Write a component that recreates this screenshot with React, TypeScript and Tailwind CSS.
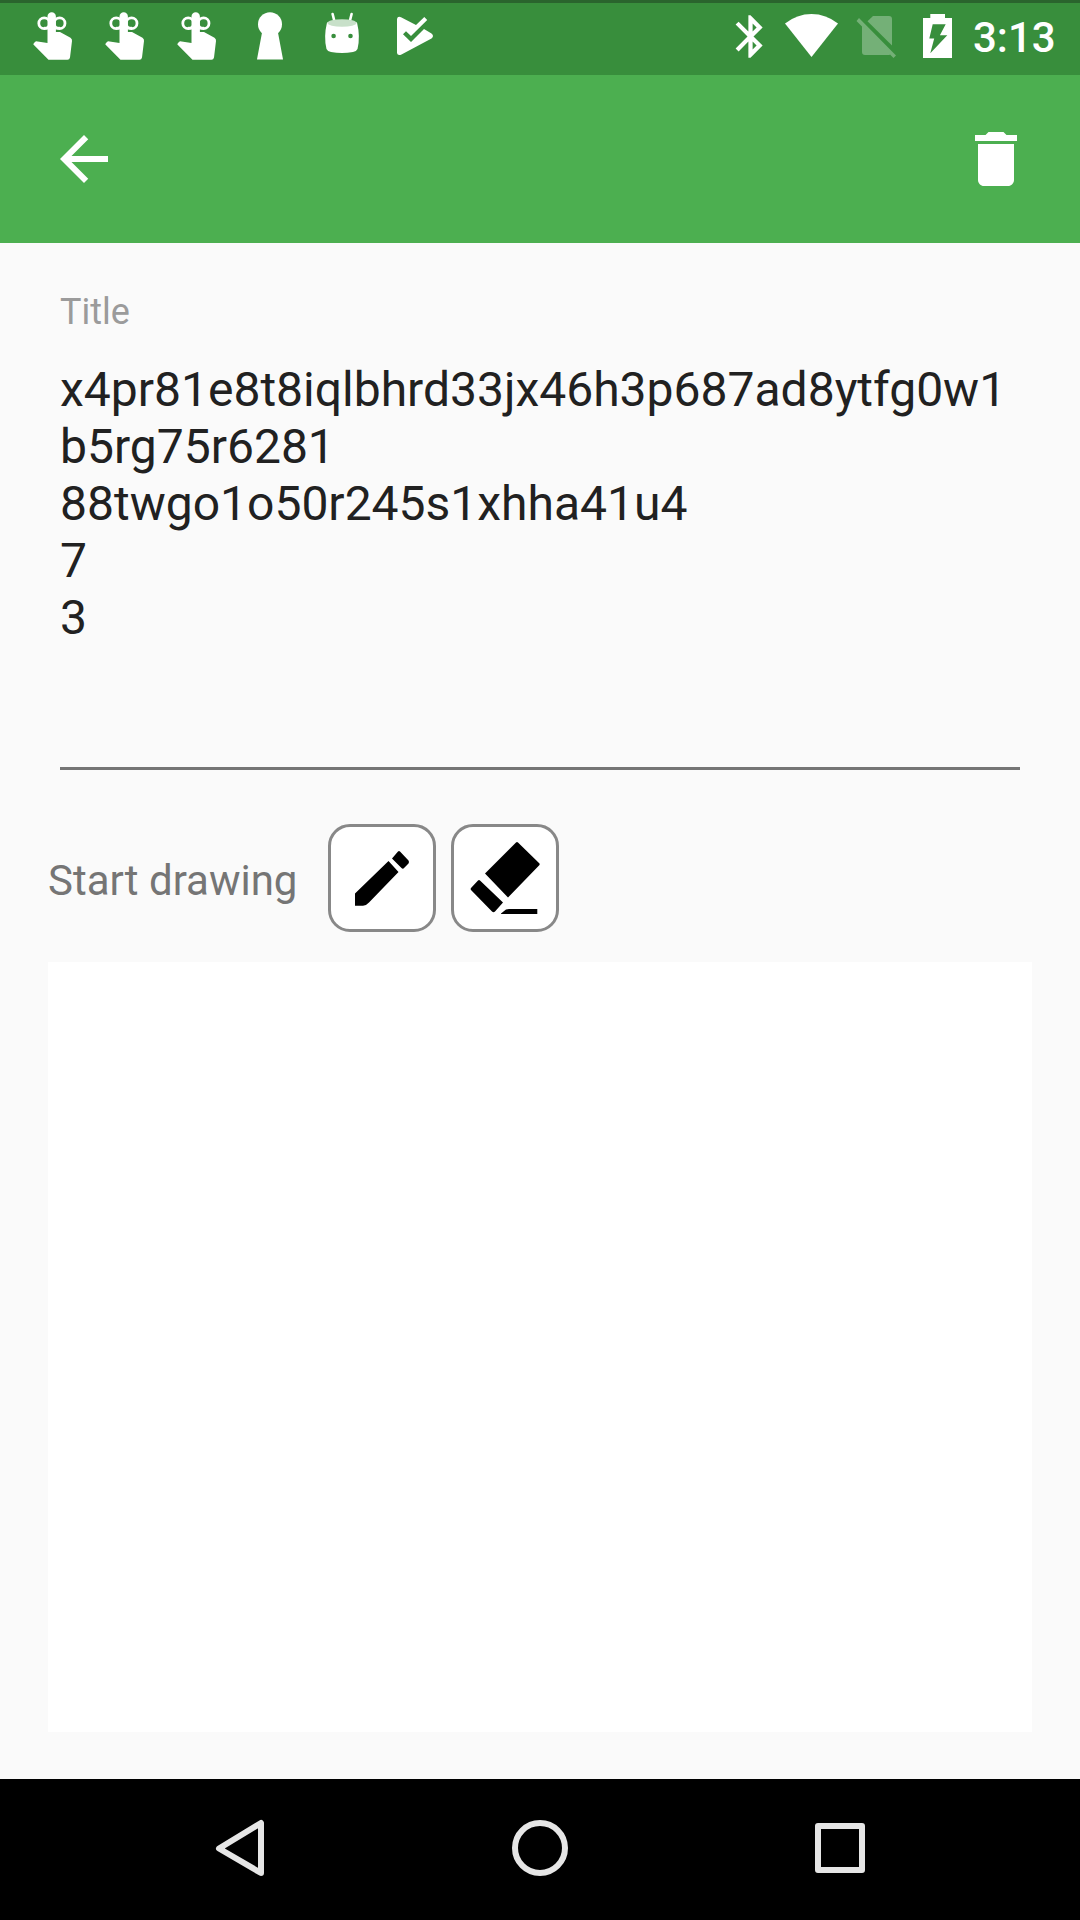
import React from "react";

function ReminderIcon() {
  return (
    <svg className="h-[72px] w-[72px]" viewBox="17 0 72 72" fill="none">
      <circle cx="44.2" cy="23.2" r="5.4" stroke="#fff" strokeWidth="2.8" />
      <circle cx="59.6" cy="23.2" r="5.4" stroke="#fff" strokeWidth="2.8" />
      <path d="M44 29.5h16v-2.7H44z" fill="#fff" />
      <path
        d="M47.5 43V16.5a4.2 4.2 0 0 1 8.4 0V32H60l10.500 5.700Q72.300 39 72 41L70 57.500Q69.500 59.700 67.500 59.700H48.500L33.400 44.500Q33 43.500 36 41.300Z"
        fill="#fff"
      />
    </svg>
  );
}

function KeyholeIcon() {
  return (
    <svg className="h-[72px] w-[72px]" viewBox="233 0 72 72" fill="#fff">
      <circle cx="270" cy="24.300" r="12" />
      <path d="M262.500 30h15L283 59.500H257Z" />
    </svg>
  );
}

function AndroidIcon() {
  return (
    <svg className="h-[72px] w-[72px]" viewBox="305 0 72 72" fill="#fff">
      <path d="M332.600 14l2 8M351.600 14l-2 8" stroke="#fff" strokeWidth="2.600" strokeLinecap="round" />
      <path d="M327 22.500Q342 18 357 22.500Q360.500 37 357.500 49Q356.500 51.500 353 52Q342 54 331 52Q327.500 51.500 326.500 49Q323.500 37 327 22.500Z" />
      <ellipse cx="342" cy="23" rx="14.500" ry="3.800" fill="#c8e0c9" />
      <circle cx="333.600" cy="36" r="2.300" fill="#388e3c" />
      <circle cx="350.500" cy="36" r="2.300" fill="#388e3c" />
    </svg>
  );
}

function PlayCheckIcon() {
  return (
    <svg className="h-[72px] w-[72px]" viewBox="377 0 72 72" fill="#fff">
      <path d="M397 19Q397.500 16 401 17.200L416 25L424.300 17L427.200 20L411 36L406 31.200L403 34.200L411 42L424 29L431.500 33.500Q434.500 36 431.500 38.500L401.500 54.500Q397.500 56 397 53Z" />
    </svg>
  );
}

function StatusBar() {
  return (
    <div className="flex h-[75px] justify-between border-t-[3px] border-[#2a642d] bg-[#388e3c]">
      <div className="-mt-[3px] ml-[17px] flex">
        <ReminderIcon />
        <ReminderIcon />
        <ReminderIcon />
        <KeyholeIcon />
        <AndroidIcon />
        <PlayCheckIcon />
      </div>
      <div className="-mt-[3px] mr-[24px] flex">
        <svg className="mt-[11px] h-[51px] w-[51px]" viewBox="0 0 24 24" fill="#fff">
          <path d="M17.71 7.71L12 2h-1v7.59L6.41 5 5 6.41 10.59 12 5 17.59 6.41 19 11 14.41V22h1l5.710-5.710-4.300-4.290 4.300-4.290zM13 5.830l1.880 1.880L13 9.590V5.830zm1.880 10.460L13 18.170v-3.760l1.880 1.880z" />
        </svg>
        <svg className="h-[72px] w-[72px]" viewBox="776 0 72 72" fill="#fff">
          <path d="M785 23.500Q797 14 811.500 14T838 23.500L811.500 57Z" />
        </svg>
        <svg className="h-[72px] w-[64px]" viewBox="848 0 64 72" fill="#74b077">
          <path d="M873 16h16Q892 16 892 19V45.500L867.500 21.300Z" />
          <path d="M859 18L896 55.500L893.500 58L890 54.500Q889.500 55 888.500 55H865Q862 55 862 52V26.500L856.500 21Z" />
        </svg>
        <svg className="h-[72px] w-[61px]" viewBox="912 0 61 72" fill="#fff">
          <path
            fillRule="evenodd"
            d="M930.300 14H945V18H952V58H923V18H930.300ZM932.700 24.300L929.300 38.500H934.200L930.300 53.300L947.300 35.300H939.900L945.700 24.300Z"
          />
        </svg>
        <span className="mt-[13px] w-[83px] whitespace-nowrap text-[42px] leading-[50px] font-medium text-white">3:13</span>
      </div>
    </div>
  );
}

function AppBar() {
  return (
    <header className="flex h-[168px] items-center justify-between bg-[#4caf50] px-12">
      <button aria-label="Back">
        <svg className="block h-[72px] w-[72px]" viewBox="0 0 24 24" fill="#fff">
          <path d="M20 11H7.830l5.590-5.590L12 4l-8 8 8 8 1.410-1.410L7.830 13H20v-2z" />
        </svg>
      </button>
      <button aria-label="Delete">
        <svg className="block h-[72px] w-[72px]" viewBox="0 0 24 24" fill="#fff">
          <path d="M6 19c0 1.100.900 2 2 2h8c1.100 0 2-.900 2-2V7H6v12zM19 4h-3.500l-1-1h-5l-1 1H5v2h14V4z" />
        </svg>
      </button>
    </header>
  );
}

const noteLines = [
  "x4pr81e8t8iqlbhrd33jx46h3p687ad8ytfg0w1",
  "b5rg75r6281",
  "88twgo1o50r245s1xhha41u4",
  "7",
  "3",
];

function Toolbar() {
  return (
    <div className="mt-[54px] flex h-[108px] items-center">
      <span className="w-[280px] whitespace-nowrap pt-[5px] text-[42px] leading-[50px] text-[#757575]">Start drawing</span>
      <div className="flex gap-[15px]">
        <button aria-label="Pencil" className="h-[108px] w-[108px] rounded-[22px] border-[3px] border-[#888] bg-white">
          <svg className="block h-[102px] w-[102px]" viewBox="331 827 102 102">
            <path d="M355 893.500L388.500 861L398.500 872L369 902.500Q366 905.800 363 905.800H355ZM392 858.500L398 851.500Q399 850.500 400 851.500L408.500 860.500Q409.500 862 408.500 863.500L403.500 868.500Q402.500 869 401.500 868Z" />
          </svg>
        </button>
        <button aria-label="Eraser" className="h-[108px] w-[108px] rounded-[22px] border-[3px] border-[#888] bg-white">
          <svg className="block h-[102px] w-[102px]" viewBox="454 827 102 102">
            <path d="M516 842.500Q517 841.500 518 842.500L539.500 863.500Q540 864.500 539 865.500L508 897.500L485 873.500ZM478 880.500Q479 879.500 480 880.500L503 902.500L495 911.500Q493.500 913 492 911.500L471 890Q470.300 889 471 888ZM501 913.500L506 909.500Q507.500 909 509 909H537.300V914H501Z" />
          </svg>
        </button>
      </div>
    </div>
  );
}

function NavigationBar() {
  return (
    <nav className="flex h-[141px] justify-center bg-black pt-[33px]">
      <div className="flex w-[300px] justify-center">
        <svg className="h-[72px] w-[72px]" viewBox="204 1812 72 72" fill="none" stroke="#e6e6e6" strokeWidth="6" strokeLinejoin="round">
          <path d="M261 1823V1873L219 1848.500Z" />
        </svg>
      </div>
      <div className="flex w-[300px] justify-center">
        <svg className="h-[72px] w-[72px]" viewBox="0 0 72 72" fill="none" stroke="#e6e6e6" strokeWidth="6">
          <circle cx="36" cy="36" r="25" />
        </svg>
      </div>
      <div className="flex w-[300px] justify-center">
        <svg className="h-[72px] w-[72px]" viewBox="0 0 72 72" fill="none" stroke="#e6e6e6" strokeWidth="6" strokeLinejoin="round">
          <rect x="14" y="14" width="44" height="44" />
        </svg>
      </div>
    </nav>
  );
}

export default function App() {
  return (
    <div className="flex h-[1920px] w-[1080px] flex-col overflow-hidden bg-[#fafafa] font-['Roboto',sans-serif]">
      <StatusBar />
      <AppBar />
      <main className="flex flex-1 flex-col px-12">
        <section className="mx-3 mt-[48px] flex h-[479px] flex-col border-b-[3px] border-[#757575]">
          <label className="text-[36px] leading-[42px] text-[#9b9b9b]">Title</label>
          <div className="mt-[28px] text-[48px] leading-[57px] text-[#212121]">
            {noteLines.map((line) => (
              <p key={line} className="whitespace-nowrap">{line}</p>
            ))}
          </div>
        </section>
        <Toolbar />
        <div className="mt-[30px] h-[770px] bg-white" />
      </main>
      <NavigationBar />
    </div>
  );
}
